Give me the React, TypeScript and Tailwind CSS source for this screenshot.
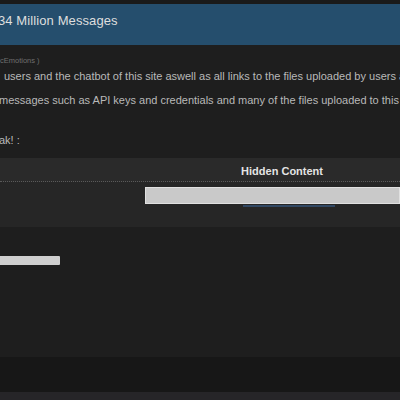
export default function App() {
  return (
    <div className="w-[400px] h-[400px] overflow-hidden bg-[#1e1e1e] font-['Liberation_Sans',Arial,sans-serif] flex flex-col">
      {/* top strip + thread title */}
      <div className="h-[4px] bg-[#1a1a1a]" />
      <div className="h-[41px] bg-[#254e6d] flex items-center pb-[8px] whitespace-nowrap">
        <span className="-ml-[2px] text-[13px] tracking-[0.1px] text-[#dedede]">34 Million Messages</span>
      </div>

      {/* post body */}
      <div className="flex flex-col whitespace-nowrap text-[11px] text-[#b9b9b9]">
        <span className="mt-[11px] leading-[10px] text-[7.5px] text-[#6f6f6f]">cEmotions )</span>
        <span className="mt-[3px] leading-[14px] pl-[4px]">
          users and the chatbot of this site aswell as all links to the files uploaded by users a
        </span>
        <span className="mt-[10px] leading-[14px] -ml-[1px]">
          messages such as API keys and credentials and many of the files uploaded to this
        </span>
        <span className="mt-[26px] leading-[14px] -ml-[1px]">ak! :</span>
      </div>

      {/* hidden content box */}
      <div className="mt-[11px] flex flex-col">
        <div className="h-[24px] bg-[#2a2a2a] flex items-center justify-end pr-[77px] pt-[3px] border-b border-dotted border-[#5a5a5a]">
          <span className="text-[11px] font-bold text-[#e4e4e4]">Hidden Content</span>
        </div>
        <div className="h-[45px] bg-[#262626] flex flex-col items-end pt-[5px]">
          <div className="w-[255px] h-[17px] bg-[#c9c9c9] border border-[#e0e0e0]" />
          <div className="mt-[1px] mr-[65px] w-[92px] h-[2px] bg-[#34557d] opacity-70" />
        </div>
      </div>

      {/* link bar */}
      <div className="mt-[29px] flex">
        <div className="w-[60px] h-[9px] bg-[#cfcfcf] rounded-r-[1px]" />
      </div>

      <div className="flex-1" />
      <div className="h-[35px] bg-[#171717]" />
      <div className="h-[8px] bg-[#262528]" />
    </div>
  );
}
